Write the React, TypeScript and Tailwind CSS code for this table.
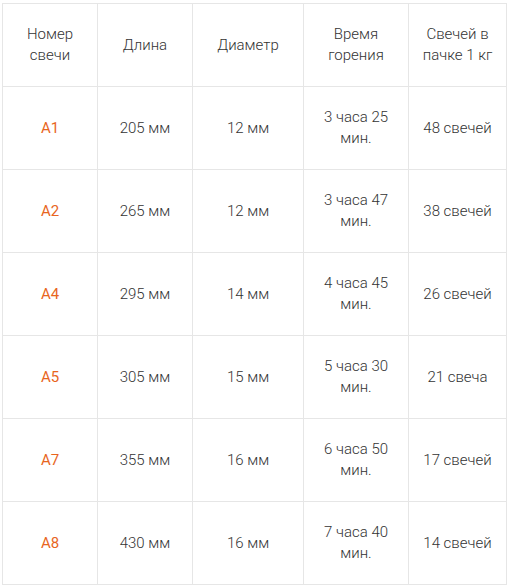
const rows = [
  { id: 'A1', len: '205 мм', dia: '12 мм', time: '3 часа 25 мин.', count: '48 свечей' },
  { id: 'A2', len: '265 мм', dia: '12 мм', time: '3 часа 47 мин.', count: '38 свечей' },
  { id: 'A4', len: '295 мм', dia: '14 мм', time: '4 часа 45 мин.', count: '26 свечей' },
  { id: 'A5', len: '305 мм', dia: '15 мм', time: '5 часа 30 мин.', count: '21 свеча' },
  { id: 'A7', len: '355 мм', dia: '16 мм', time: '6 часа 50 мин.', count: '17 свечей' },
  { id: 'A8', len: '430 мм', dia: '16 мм', time: '7 часа 40 мин.', count: '14 свечей' },
];

const cell = 'border border-[#e6e6e6] h-[83px] text-center align-middle';
const pad = 'px-[14px]';

export default function App() {
  return (
    <div className="bg-white w-[510px] h-[588px] pt-[3px] pl-[2px] font-['Roboto',sans-serif] font-light text-[15px] leading-[21px] text-[#333333]">
      <table className="w-[504px] border-collapse table-fixed">
        <colgroup>
          <col className="w-[95px]" />
          <col className="w-[95px]" />
          <col className="w-[111px]" />
          <col className="w-[105px]" />
          <col className="w-[98px]" />
        </colgroup>
        <thead>
          <tr>
            <th className={`${cell} ${pad} font-light`}>Номер свечи</th>
            <th className={`${cell} ${pad} font-light`}>Длина</th>
            <th className={`${cell} ${pad} font-light`}>Диаметр</th>
            <th className={`${cell} ${pad} font-light`}>Время горения</th>
            <th className={`${cell} px-0 font-light whitespace-nowrap`}>
              Свечей в<br />пачке 1 кг
            </th>
          </tr>
        </thead>
        <tbody>
          {rows.map((r) => (
            <tr key={r.id}>
              <td className={`${cell} ${pad} text-[#e8651e] font-normal`}>{r.id}</td>
              <td className={`${cell} ${pad}`}>{r.len}</td>
              <td className={`${cell} ${pad}`}>{r.dia}</td>
              <td className={`${cell} ${pad}`}>{r.time}</td>
              <td className={`${cell} px-1`}>{r.count}</td>
            </tr>
          ))}
        </tbody>
      </table>
    </div>
  );
}
